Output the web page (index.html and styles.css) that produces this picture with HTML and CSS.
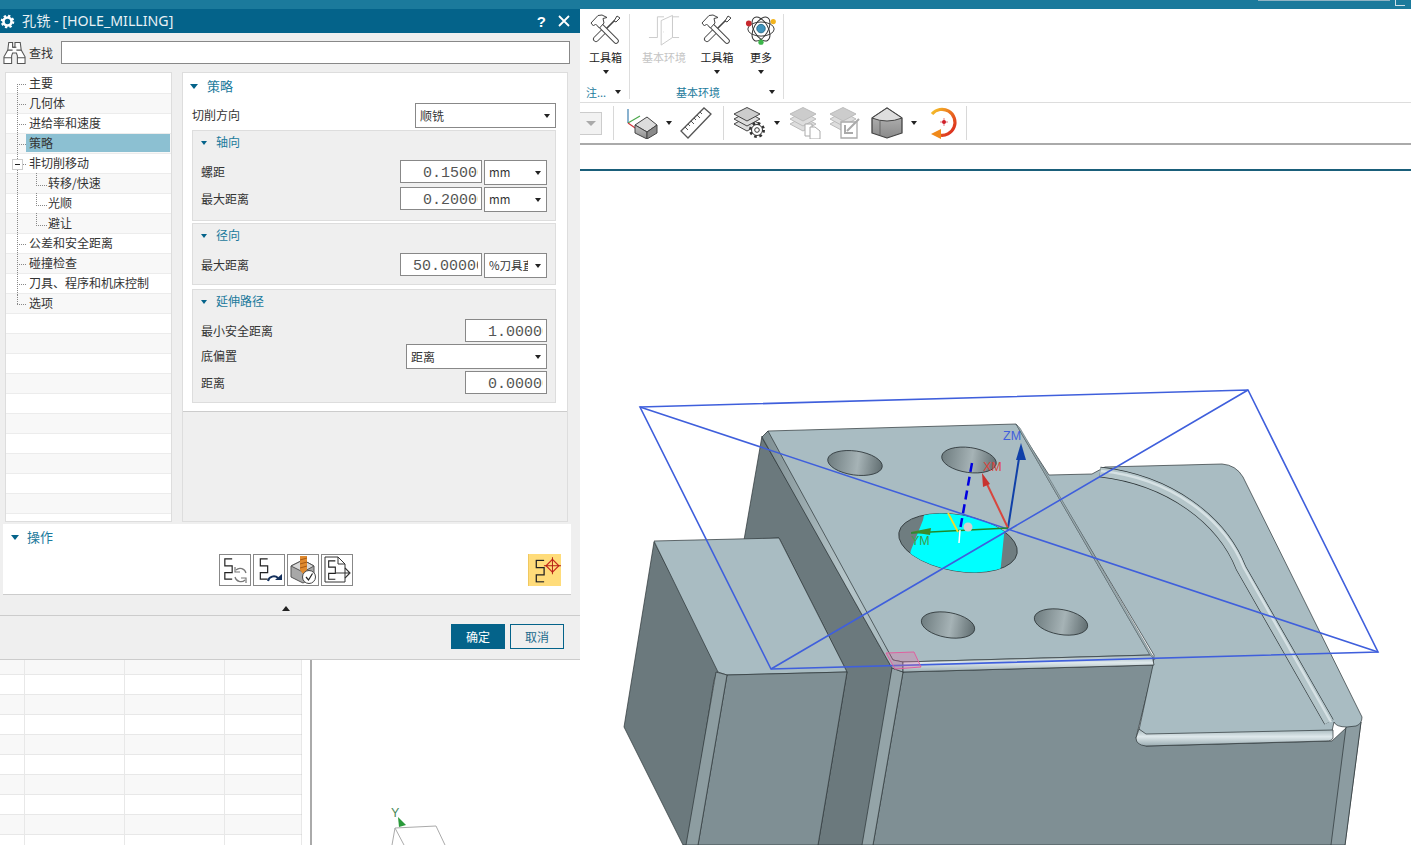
FILE: index.html
```html
<!DOCTYPE html>
<html lang="zh-CN">
<head>
<meta charset="utf-8">
<title>孔铣 - [HOLE_MILLING]</title>
<link rel="stylesheet" href="styles.css">
</head>
<body>
<svg class="defs" width="0" height="0" aria-hidden="true">
  <symbol id="tools" viewBox="0 0 32 32">
    <path d="M14 17 6 25" fill="none" stroke="#444" stroke-width="6" stroke-linecap="round"/>
    <path d="M14 17 6 25" fill="none" stroke="#fff" stroke-width="4.200" stroke-linecap="round"/>
    <path d="M14 17 25 6" fill="none" stroke="#444" stroke-width="1.600"/>
    <path d="M24 7 27 2 30 4 26 8Z" fill="#fff" stroke="#444" stroke-width="1"/>
    <path d="M10 11 26 27" fill="none" stroke="#444" stroke-width="5.600" stroke-linecap="round"/>
    <path d="M10 11 26 27" fill="none" stroke="#fff" stroke-width="3.800" stroke-linecap="round"/>
    <path d="M1 9 8 1.500 12 1 17 3.500 13 4.500 14 9 9.500 14 5.500 10 3.500 12Z" fill="#fff" stroke="#444" stroke-width="1" stroke-linejoin="round"/>
  </symbol>
  <symbol id="serp" viewBox="0 0 12 24">
    <path d="M10 1H2V8.500H10V16H2V23H10" fill="none" stroke="#222" stroke-width="1.300"/>
  </symbol>
  <symbol id="layers" viewBox="0 0 28 28">
    <path d="M1 17 14 10 27 17 14 24Z" fill="#ddd" stroke="currentColor"/>
    <path d="M1 12 14 5 27 12 14 19Z" fill="#ddd" stroke="currentColor"/>
    <path d="M1 7 14 0.500 27 7 14 14Z" fill="#ccc" stroke="currentColor"/>
  </symbol>
</svg>

<div class="app">
  <div class="topbar"><span class="top-search"></span><span class="top-corner"></span></div>

  <div class="ribbon">
    <div class="rib-group rib-group-a">
      <div class="rib-tools">
        <div class="tool tool-a"><svg class="tool-icon"><use href="#tools"/></svg><span class="tool-label">工具箱</span><i class="caret"></i></div>
      </div>
      <div class="rib-label"><span>注...</span><i class="caret"></i></div>
    </div>
    <div class="rib-group rib-group-b">
      <div class="rib-tools">
        <div class="tool tool-door">
          <svg class="tool-icon" viewBox="0 0 34 34"><path d="M1 25H10V3H17M26 3H33M26 25H33M26 3V25" fill="none" stroke="#c9c9c9"/><path d="M14 7 26 1.500V25L14 33Z" fill="#fff" stroke="#c9c9c9"/><circle cx="16.500" cy="19" r=".5" fill="#bbb"/></svg>
          <span class="tool-label tool-label-off">基本环境</span>
        </div>
        <div class="tool tool-box"><svg class="tool-icon"><use href="#tools"/></svg><span class="tool-label">工具箱</span><i class="caret"></i></div>
        <div class="tool tool-more">
          <svg class="tool-icon" viewBox="0 0 34 34"><g fill="none" stroke="#333" stroke-width="1"><ellipse cx="17" cy="16" rx="14" ry="7.500"/><ellipse cx="17" cy="16" rx="14" ry="7.500" transform="rotate(60 17 16)"/><ellipse cx="17" cy="16" rx="14" ry="7.500" transform="rotate(120 17 16)"/></g><circle cx="17" cy="15.500" r="4.500" fill="#3f94bd" stroke="#2a6d8c"/><circle cx="4" cy="10" r="3" fill="#c8282d"/><circle cx="30" cy="8" r="2.800" fill="#f2b31c"/><circle cx="17" cy="30" r="2.800" fill="#3cb54a"/></svg>
          <span class="tool-label">更多</span><i class="caret"></i>
        </div>
      </div>
      <div class="rib-label rib-label-b"><span>基本环境</span><i class="caret"></i></div>
    </div>
  </div>

  <div class="toolbar">
    <div class="tb-combo"><i class="caret caret-off"></i></div>
    <i class="tb-sep tb-sep-a"></i>
    <svg class="tb-icon tb-axis" viewBox="0 0 32 32">
      <defs><linearGradient id="cubel" x1="0" x2="0" y1="0" y2="1"><stop offset="0" stop-color="#c4c4c4"/><stop offset="1" stop-color="#8c8c8c"/></linearGradient></defs>
      <path d="M2 16V2" stroke="#3b7fb0" stroke-width="1.200"/><path d="M2 16 14 9" stroke="#4aa84a" stroke-width="1.200"/><path d="M2 16 15 25" stroke="#d0343a" stroke-width="1.200"/>
      <path d="M9 18 21 10 31 18 21 25Z" fill="#dcdcdc" stroke="#444"/><path d="M9 18 21 25V32L9 26Z" fill="url(#cubel)" stroke="#444"/><path d="M21 25 31 18V26L21 32Z" fill="#8a8a8a" stroke="#444"/>
    </svg>
    <i class="caret tb-caret"></i>
    <svg class="tb-icon tb-ruler" viewBox="0 0 32 32">
      <path d="M1 24 24 1 31 7 8 31Z" fill="#fff" stroke="#555" stroke-width="1.300"/>
      <path d="M5 20 8 23M8 17 10 19M11 14 14 17M14 11 16 13M17 8 20 11M20 5 22 7" stroke="#555" stroke-width="1"/>
    </svg>
    <i class="tb-sep tb-sep-b"></i>
    <svg class="tb-icon tb-layergear" viewBox="0 0 34 32">
      <use href="#layers" x="0" y="0" width="28" height="28" class="ink-dark"/>
      <circle cx="24" cy="23" r="6.500" fill="#fff" stroke="#333" stroke-width="3" stroke-dasharray="2.500 2.600"/>
      <circle cx="24" cy="23" r="5.500" fill="#fff" stroke="#333"/><circle cx="24" cy="23" r="2.300" fill="#fff" stroke="#333"/>
    </svg>
    <i class="caret tb-caret tb-caret-gear"></i>
    <svg class="tb-icon tb-copy" viewBox="0 0 32 32">
      <use href="#layers" x="0" y="0" width="28" height="28" class="ink-light"/>
      <path d="M16 17H23V29H16Z" fill="#fff" stroke="#aaa"/><path d="M21 20H26L31 24V32H21Z" fill="#fff" stroke="#aaa"/>
    </svg>
    <svg class="tb-icon tb-export" viewBox="0 0 32 32">
      <use href="#layers" x="0" y="0" width="28" height="28" class="ink-light"/>
      <path d="M12 15H28V31H12Z" fill="#fff" stroke="#aaa" stroke-width="1.300"/><path d="M30 12 18 24M16 18V26H24" fill="none" stroke="#aaa" stroke-width="2"/>
    </svg>
    <svg class="tb-icon tb-solid" viewBox="0 0 32 32">
      <defs><linearGradient id="solidg" x1="0" x2="0" y1="0" y2="1"><stop offset="0" stop-color="#bdbdbd"/><stop offset="1" stop-color="#8a8a8a"/></linearGradient></defs>
      <path d="M1 11 16 1 31 11V26L16 31 1 26Z" fill="url(#solidg)" stroke="#444" stroke-width="1.300" stroke-linejoin="round"/>
      <path d="M1 11 16 1 31 11Q16 17 1 11Z" fill="#dedede" stroke="#444"/><path d="M9 14V28" stroke="#666"/>
    </svg>
    <i class="caret tb-caret tb-caret-solid"></i>
    <svg class="tb-icon tb-rotate" viewBox="0 0 32 32">
      <defs><linearGradient id="rotg" x1="0" x2="1" y1="0" y2="1"><stop offset="0" stop-color="#f6c52a"/><stop offset=".5" stop-color="#ea6a1f"/><stop offset="1" stop-color="#d8201f"/></linearGradient></defs>
      <path d="M3 7A13 13 0 1 1 10 28" fill="none" stroke="url(#rotg)" stroke-width="3.200"/>
      <path d="M12 22V32L2 27Z" fill="#f08a1c"/><circle cx="15" cy="15" r="2" fill="#d0202a"/><path d="M15 11V19M11 15H19" stroke="#d0202a" stroke-width=".6"/>
    </svg>
    <i class="tb-sep tb-sep-c"></i>
  </div>

  <div class="tabstrip"></div>

  <div class="main">
    <div class="left-pane">
      <div class="grid-row grid-row-alt"><i></i><i></i><i></i><i></i></div>
      <div class="grid-row"><i></i><i></i><i></i><i></i></div>
      <div class="grid-row grid-row-alt"><i></i><i></i><i></i><i></i></div>
      <div class="grid-row"><i></i><i></i><i></i><i></i></div>
      <div class="grid-row grid-row-alt"><i></i><i></i><i></i><i></i></div>
      <div class="grid-row"><i></i><i></i><i></i><i></i></div>
      <div class="grid-row grid-row-alt"><i></i><i></i><i></i><i></i></div>
      <div class="grid-row"><i></i><i></i><i></i><i></i></div>
      <div class="grid-row grid-row-alt"><i></i><i></i><i></i><i></i></div>
      <div class="grid-row"><i></i><i></i><i></i><i></i></div>
    </div>

    <svg class="viewport" viewBox="312 171 1099 674" preserveAspectRatio="none">
      <defs>
        <linearGradient id="holeg" x1="0" x2="1" y1="0" y2="0"><stop offset="0" stop-color="#6f7d80"/><stop offset=".55" stop-color="#a6b3b6"/><stop offset="1" stop-color="#616e71"/></linearGradient>
        <linearGradient id="filletb" x1="0" x2="0" y1="0" y2="1"><stop offset="0" stop-color="#a3b5ba"/><stop offset=".45" stop-color="#dfe9ec"/><stop offset="1" stop-color="#9aacb1"/></linearGradient>
        <linearGradient id="filletl" x1="0" x2="1" y1="0" y2="0"><stop offset="0" stop-color="#7e8e92"/><stop offset=".6" stop-color="#b6c6ca"/><stop offset="1" stop-color="#a3b5ba"/></linearGradient>
        <clipPath id="bighole"><ellipse cx="958" cy="543" rx="60" ry="28" transform="rotate(10 958 543)"/></clipPath>
      </defs>
      <g stroke="#2b3336" stroke-width=".7" stroke-linejoin="round">
        <path d="M762 436 744 540 779 538 847 672 818 845H870L892 668Z" fill="#6b797d"/>
        <path d="M654 542 720 668 714 680 688 845H683L624 727Z" fill="#6b797d"/>
        <path d="M654 541 779 538 847 672 727 675 718 672Z" fill="#a9bcc2"/>
        <path d="M727 675 847 672 818 845H698Z" fill="#7f8f94"/>
        <path d="M716 672 727 675 698 845H686Z" fill="#8d9da1"/>
        <path d="M903 672 1154 665 1136 738 1146 746 1332 741 1347 727 1361 722 1345 845H873Z" fill="#7f8f94"/>
        <path d="M1346 727 1361 722 1345 845H1331Z" fill="#8c9ca1"/>
        <path d="M892 668 903 672 873 845H862Z" fill="#94a4a8"/>
        <path d="M1016 424 1049 475 1092 474 1105 467 1222 464Q1236 465 1243 477L1362 717Q1362 724 1356 726L1347 727Q1336 727 1334 722L1332 731 1146 735 1139 730 1153 665 1154 655Z" fill="#a9bcc2"/>
        <path d="M1146 734 1333 730V738Q1332 741 1326 741L1146 746Q1136 745 1136 738L1139 729Z" fill="url(#filletb)"/>
        <path d="M1100 472C1170 480 1222 520 1241 568L1329 722" fill="none" stroke="#2b3336" stroke-width="10.500"/>
        <path d="M1100 472C1170 480 1222 520 1241 568L1329 722" fill="none" stroke="#b4c5c9" stroke-width="9.300"/>
        <path d="M1101 471C1170 478 1224 518 1244 568L1331 722" fill="none" stroke="#d6e1e4" stroke-width="2.500"/>
        <path d="M768 431 1016 424 1150 655 903 662 893 660 762 438Z" fill="#a9bcc2"/>
        <path d="M768 431 762 437 892 668 903 672 903 662 893 660Z" fill="url(#filletl)"/>
        <path d="M903 662 1152 655 1154 665 903 672Z" fill="url(#filletb)"/>
        <path d="M1016 424 1020 428 1155 660 1150 655Z" fill="#9fb1b6" stroke="#5a686c" stroke-width=".5"/>
      </g>
      <g stroke="#2b3336" stroke-width=".8">
        <ellipse cx="855" cy="463" rx="27.500" ry="12" transform="rotate(8 855 463)" fill="url(#holeg)"/>
        <ellipse cx="969" cy="460" rx="27.500" ry="12.500" transform="rotate(8 969 460)" fill="url(#holeg)"/>
        <ellipse cx="948" cy="625" rx="27" ry="12.500" transform="rotate(10 948 625)" fill="url(#holeg)"/>
        <ellipse cx="1061" cy="622" rx="27" ry="12.500" transform="rotate(10 1061 622)" fill="url(#holeg)"/>
        <ellipse cx="958" cy="543" rx="60" ry="28" transform="rotate(10 958 543)" fill="#6f7d80"/>
      </g>
      <path clip-path="url(#bighole)" d="M926 505H1007L1000 575H905L911 550 923 520Z" fill="#00ffff"/>
      <g fill="none" stroke="#3f5fdc" stroke-width="1.600">
        <path d="M640 407 1248 390 1378 652 771 669Z"/>
        <path d="M640 407 1378 652M1248 390 771 669"/>
      </g>
      <path d="M886 653 914 652 921 667 895 669Z" fill="#e06fa8" fill-opacity=".3" stroke="#e0609f"/>
      <path d="M1008 528 1020 452" stroke="#1040a8" stroke-width="2"/>
      <path d="M1021 443 1026 460H1016Z" fill="#1040a8"/>
      <path d="M1008 528 986 482" stroke="#d8463e" stroke-width="2"/>
      <path d="M982 473 990 484 983 487Z" fill="#c8322e"/>
      <path d="M1008 528 911 533" stroke="#1f8a2a" stroke-width="1.500"/>
      <path d="M911 532 931 528 930 535Z" fill="#3f8a2a"/>
      <path d="M972 463 960 530" stroke="#0000e0" stroke-width="2.500" stroke-dasharray="9 5" fill="none"/>
      <path d="M948 513 958 532" stroke="#f2de2a" stroke-width="1.800"/>
      <path d="M960 530 959 543" stroke="#fff" stroke-width="1.500"/>
      <circle cx="968" cy="527" r="4.500" fill="#d0d0d0"/>
      <text class="lbl-axis" x="1003" y="440" fill="#3f5fdc">ZM</text>
      <text class="lbl-axis" x="983" y="471" fill="#d8463e">XM</text>
      <text class="lbl-axis" x="911" y="545" fill="#3f9a4a">YM</text>
      <text class="lbl-axis" x="391" y="817" fill="#4a8a5a">Y</text>
      <path d="M398 817 406 825 399 827Z" fill="#2a9a3a"/>
      <path d="M392 845 395 828 436 826 445 845M395 828 404 845" fill="none" stroke="#aaa"/>
    </svg>
  </div>

  <section class="dialog">
    <header class="dlg-title">
      <svg class="dlg-gear" viewBox="0 0 16 16"><circle cx="8" cy="8" r="6" fill="none" stroke="#fff" stroke-width="2.500" stroke-dasharray="2.400 2.300"/><circle cx="8" cy="8" r="4.300" fill="none" stroke="#fff" stroke-width="2.800"/></svg>
      <span class="dlg-name">孔铣 - [HOLE_MILLING]</span>
      <span class="dlg-help">?</span>
      <svg class="dlg-close" viewBox="0 0 12 12"><path d="M1 1 11 11M11 1 1 11" stroke="#fff" stroke-width="1.800"/></svg>
    </header>

    <div class="search">
      <svg class="binoc" viewBox="0 0 24 24" fill="#fff" stroke="#555" stroke-width="1.100">
        <path d="M6 1H10V6H12.500V1H18V1L19 9 23 16V23H15V15L14 12H10L9 15V23H1V16L5 9Z"/>
        <path d="M1 17H9M15 17H23M10 6H14M5 9H10M14 9H19"/>
      </svg>
      <span class="search-label">查找</span>
      <div class="search-input"></div>
    </div>

    <div class="panes">
      <nav class="tree">
        <div class="node lv0 first"><span class="txt">主要</span></div>
        <div class="node lv0 alt"><span class="txt">几何体</span></div>
        <div class="node lv0"><span class="txt">进给率和速度</span></div>
        <div class="node lv0 alt"><span class="txt sel">策略</span></div>
        <div class="node lv0"><b class="toggle"></b><span class="txt">非切削移动</span></div>
        <div class="node lv1 alt"><span class="txt">转移/快速</span></div>
        <div class="node lv1"><span class="txt">光顺</span></div>
        <div class="node lv1 alt last1"><span class="txt">避让</span></div>
        <div class="node lv0"><span class="txt">公差和安全距离</span></div>
        <div class="node lv0 alt"><span class="txt">碰撞检查</span></div>
        <div class="node lv0"><span class="txt">刀具、程序和机床控制</span></div>
        <div class="node lv0 alt last0"><span class="txt">选项</span></div>
        <div class="node"></div><div class="node alt"></div><div class="node"></div><div class="node alt"></div>
        <div class="node"></div><div class="node alt"></div><div class="node"></div><div class="node alt"></div>
        <div class="node"></div><div class="node alt"></div><div class="node"></div>
      </nav>

      <div class="props">
        <div class="sec">
          <div class="sec-head sec-head-main"><i class="tri"></i><span>策略</span></div>
          <div class="dir-row"><span class="lab-dir">切削方向</span><div class="sel-box sel-dir"><span>顺铣</span><i class="caret"></i></div></div>

          <div class="grp grp-axial">
            <div class="grp-head"><i class="tri tri-s"></i><span>轴向</span></div>
            <div class="rows">
              <div class="row"><span class="lab">螺距</span><div class="num"><span class="num-val">0.15000</span></div><div class="sel-box sel-unit"><span>mm</span><i class="caret"></i></div></div>
              <div class="row"><span class="lab">最大距离</span><div class="num"><span class="num-val">0.20000</span></div><div class="sel-box sel-unit"><span>mm</span><i class="caret"></i></div></div>
            </div>
          </div>

          <div class="grp grp-radial">
            <div class="grp-head"><i class="tri tri-s"></i><span>径向</span></div>
            <div class="rows">
              <div class="row"><span class="lab">最大距离</span><div class="num num-w"><span class="num-val">50.00000</span></div><div class="sel-box sel-unit"><span class="clip">%刀具直径</span><i class="caret"></i></div></div>
            </div>
          </div>

          <div class="grp grp-ext">
            <div class="grp-head"><i class="tri tri-s"></i><span>延伸路径</span></div>
            <div class="rows">
              <div class="row row-s"><span class="lab">最小安全距离</span><div class="num"><span class="num-val">1.00000</span></div></div>
              <div class="row"><span class="lab">底偏置</span><div class="sel-box sel-wide"><span>距离</span><i class="caret"></i></div></div>
              <div class="row row-s"><span class="lab">距离</span><div class="num"><span class="num-val">0.00000</span></div></div>
            </div>
          </div>
        </div>
      </div>
    </div>

    <div class="ops">
      <div class="sec-head ops-head"><i class="tri"></i><span>操作</span></div>
      <div class="ops-icons">
        <button class="act" type="button">
          <svg viewBox="0 0 30 30"><use href="#serp" x="3" y="3" width="11" height="22"/><path d="M26 18A6 6 0 0 0 16 15M15 22A6 6 0 0 0 25 25" fill="none" stroke="#777" stroke-width="1.200"/><path d="M15 12V17H20M26 28V23H21" fill="none" stroke="#777" stroke-width="1.200"/></svg>
        </button>
        <button class="act" type="button">
          <svg viewBox="0 0 30 30"><use href="#serp" x="4" y="3" width="12" height="22"/><path d="M14 26A6 6 0 0 1 24 23" fill="none" stroke="#14305c" stroke-width="2"/><path d="M21 25H28V19Z" fill="#14305c"/></svg>
        </button>
        <button class="act" type="button">
          <svg viewBox="0 0 30 30"><path d="M3 11 15 5 26 11V22L15 28 3 22Z" fill="#a8a8a8" stroke="#555"/><path d="M3 11 15 17 26 11 15 5Z" fill="#d8d8d8" stroke="#555"/><path d="M12 1H19V15L15 19 12 15Z" fill="#e08a2e"/><path d="M12 5 19 3M12 9 19 7M12 13 19 11" stroke="#a85a14"/><circle cx="21" cy="22" r="6.500" fill="#fff" stroke="#444"/><path d="M18 22 20.500 25 24.500 18.500" fill="none" stroke="#222" stroke-width="1.200"/></svg>
        </button>
        <button class="act" type="button">
          <svg viewBox="0 0 30 30"><path d="M3 2H16L23 9V27H3Z" fill="#fff" stroke="#333"/><path d="M16 2V9H23" fill="none" stroke="#333"/><use href="#serp" x="5" y="5" width="10" height="20"/><path d="M14 18H27M23 13 28 18 23 23" fill="none" stroke="#333" stroke-width="1.100"/></svg>
        </button>
        <button class="act act-on" type="button">
          <svg viewBox="0 0 30 30"><use href="#serp" x="5" y="5" width="11" height="22"/><path d="M22 5 28 11 22 17 16 11Z" fill="none" stroke="#c8281e" stroke-width="1.100"/><path d="M22 3V19M14 11H30" stroke="#b01e14" stroke-width=".9"/></svg>
        </button>
      </div>
    </div>

    <div class="collapse"><i class="tri-up"></i></div>

    <footer class="dlg-foot">
      <button class="btn btn-ok" type="button">确定</button>
      <button class="btn" type="button">取消</button>
    </footer>
  </section>
</div>
</body>
</html>
```

FILE: styles.css
```css
* { box-sizing: border-box; }
html, body { margin: 0; padding: 0; background: #fff; }
body {
  font-family: "Noto Sans CJK SC", "Noto Sans", sans-serif;
  font-size: 12px;
  color: #333;
  overflow: hidden;
}
i { display: block; }
.defs { position: absolute; }
.ink-dark { color: #444; }
.ink-light { color: #bbb; }

.app { position: relative; width: 1411px; height: 845px; overflow: hidden; background: #fff; }

.caret { width: 0; height: 0; border-left: 3.500px solid transparent; border-right: 3.500px solid transparent; border-top: 4px solid #222; }

/* top bar */
.topbar { height: 9px; background: #1b7a9c; display: flex; justify-content: flex-end; }
.top-search { width: 132px; height: 1px; background: #8fb4c4; margin-right: 5px; }
.top-corner { width: 10px; height: 6px; border-left: 1px solid #cfe0e8; border-bottom: 1px solid #cfe0e8; margin-right: 6px; }

/* ribbon */
.ribbon { height: 94px; display: flex; padding-left: 582px; border-bottom: 1px solid #ddd; padding-bottom: 3px; }
.rib-group { display: flex; flex-direction: column; border-right: 1px solid #ddd; margin-top: 5px; }
.rib-group-a { width: 48px; }
.rib-group-b { width: 154px; }
.rib-tools { display: flex; height: 72px; }
.tool { display: flex; flex-direction: column; align-items: center; }
.tool-icon { width: 34px; height: 32px; display: block; }
.tool-label { font-size: 11px; line-height: 14px; margin-top: 4px; color: #222; white-space: nowrap; }
.tool-label-off { color: #c4c4c4; }
.tool .caret { margin-top: 6px; }
.tool-a { width: 47px; }
.tool-door { width: 46px; margin-left: 11px; }
.tool-box { width: 44px; margin-left: 8px; }
.tool-more { width: 40px; margin-left: 2px; }
.rib-label { display: flex; justify-content: space-between; align-items: center; height: 14px; color: #1b7a9c; font-size: 11px; padding: 0 8px 0 4px; }
.rib-label-b { padding: 0 8px 0 46px; }

/* toolbar */
.toolbar { height: 42px; display: flex; align-items: center; padding-left: 580px; border-bottom: 2px solid #aaa; }
.tb-combo { width: 22px; height: 23px; border: 1px solid #ccc; border-left: 0; background: #f2f2f2; display: flex; align-items: center; justify-content: center; }
.caret-off { border-top-color: #aaa; border-left-width: 5px; border-right-width: 5px; border-top-width: 5px; }
.tb-sep { width: 1px; height: 34px; background: #d8d8d8; }
.tb-sep-a { margin-left: 11px; }
.tb-sep-b { margin-left: 11px; }
.tb-sep-c { margin-left: 5px; }
.tb-icon { width: 32px; height: 32px; display: block; flex: none; }
.tb-axis { margin-left: 12px; }
.tb-caret { margin-left: 8px; }
.tb-ruler { margin-left: 8px; }
.tb-layergear { width: 34px; margin-left: 9px; }
.tb-caret-gear { margin-left: 7px; }
.tb-copy { margin-left: 9px; }
.tb-export { margin-left: 8px; }
.tb-solid { margin-left: 10px; }
.tb-caret-solid { margin-left: 8px; }
.tb-rotate { margin-left: 12px; }

.tabstrip { height: 26px; border-bottom: 2px solid #1a5f7a; }

/* main */
.main { display: flex; height: 674px; }
.left-pane { width: 312px; flex: none; padding-top: 484px; border-right: 2px solid #aaa; overflow: hidden; padding-right: 8px; }
.grid-row { display: grid; grid-template-columns: 25px 100px 100px 77px; height: 20px; border-bottom: 1px solid #e8e8e8; border-right: 1px solid #ccc; }
.grid-row-alt { background: #f8f8f8; }
.grid-row i { border-right: 1px solid #e8e8e8; }
.viewport { width: 1099px; height: 674px; display: block; flex: none; }
.lbl-axis { font-family: "Liberation Sans", sans-serif; font-size: 12.500px; }

/* dialog */
.dialog { position: absolute; left: 0; top: 9px; width: 580px; height: 651px; background: #efefef; border-bottom: 1px solid #ccc; display: flex; flex-direction: column; }
.dlg-title { height: 24px; flex: none; background: #04638a; color: #fff; display: flex; align-items: center; }
.dlg-gear { width: 15px; height: 15px; display: block; margin-right: 7px; }
.dlg-name { font-size: 14.200px; line-height: 24px; color: #e8f1f5; font-family: "Noto Sans", "Noto Sans CJK SC", sans-serif; }
.dlg-help { margin-left: auto; font: bold 15px "Liberation Sans", sans-serif; margin-right: 12px; }
.dlg-close { width: 12px; height: 12px; margin-right: 10px; display: block; }

.search { height: 39px; flex: none; display: flex; align-items: center; padding: 0 10px 0 3px; }
.binoc { width: 23px; height: 24px; display: block; flex: none; }
.search-label { margin-left: 3px; width: 32px; font-size: 12px; }
.search-input { flex: 1; height: 23px; background: #fff; border: 1px solid #888; }

.panes { height: 450px; flex: none; display: flex; padding-left: 5px; }
.tree { width: 167px; height: 450px; background: #fff; border: 1px solid #ddd; overflow: hidden; padding-top: 1px; }
.node { position: relative; height: 20px; padding-left: 20px; padding-bottom: 1px; border-bottom: 1px solid #ececec; display: flex; }
.node.alt { background: #f8f8f8; }
.txt { flex: 1; line-height: 17px; padding-left: 3px; margin-right: 1px; color: #333; white-space: nowrap; }
.txt.sel { background: #8cc0d2; line-height: 18px; }
.lv1 .txt { padding-left: 22px; }
.lv0::before { content: ""; position: absolute; left: 11px; top: 0; height: 21px; border-left: 1px dotted #888; }
.lv0::after { content: ""; position: absolute; left: 11px; top: 10px; width: 9px; border-top: 1px dotted #888; }
.lv1::before { content: ""; position: absolute; left: 11px; top: 0; height: 21px; border-left: 1px dotted #888; }
.lv1::after { content: ""; position: absolute; left: 30px; top: -1px; width: 10px; height: 12px; border-left: 1px dotted #888; border-bottom: 1px dotted #888; }
.first::before { top: 10px; height: 11px; }
.last0::before { height: 10px; }
.toggle { position: absolute; left: 6px; top: 5px; width: 11px; height: 11px; background: #fff; border: 1px solid #ccc; z-index: 1; }
.toggle::after { content: ""; position: absolute; left: 2px; top: 4px; width: 5px; height: 1px; background: #222; }

.props { width: 386px; height: 450px; margin-left: 10px; border: 1px solid #ddd; background: #efefef; }
.sec { background: #fff; padding: 0 11px 8px 9px; border-bottom: 1px solid #ccc; }
.sec-head { height: 30px; display: flex; align-items: flex-start; padding-top: 3px; color: #1b7a9c; font-size: 13px; line-height: 20px; }
.tri { width: 0; height: 0; border-left: 4.500px solid transparent; border-right: 4.500px solid transparent; border-top: 5px solid #04638a; margin: 8px 8px 0 -2px; }
.sec-head-main .tri { margin-right: 9px; }
.tri-s { border-left-width: 3.500px; border-right-width: 3.500px; border-top-width: 4px; margin: 10px 9px 0 0; }
.dir-row { display: flex; justify-content: space-between; align-items: center; height: 25px; margin-bottom: 2px; }
.lab-dir { position: relative; top: -1px; }
.sel-box { height: 25px; background: #fff; border: 1px solid #888; display: flex; align-items: center; justify-content: space-between; padding: 0 5px 0 4px; overflow: hidden; }
.sel-box .caret { flex: none; }
.sel-dir { width: 141px; }
.sel-unit { width: 63px; margin-left: 2px; font-size: 11.500px; flex: none; padding-bottom: 2px; }
.sel-unit .caret { margin-top: 2px; }
.sel-wide { width: 141px; }
.clip { width: 39px; overflow: hidden; white-space: nowrap; font-size: 11.500px; }

.grp { background: #efefef; border: 1px solid #ddd; padding: 0 8px 0 8px; margin-bottom: 2px; }
.grp-axial { height: 91px; }
.grp-radial { height: 62px; margin-bottom: 4px; }
.grp-ext { height: 114px; margin-bottom: 0; }
.grp-head { height: 29px; display: flex; align-items: flex-start; color: #1b7a9c; font-size: 12px; line-height: 22px; }
.rows { display: flex; flex-direction: column; gap: 2px; }
.row { display: flex; align-items: flex-start; height: 25px; }
.row-s { height: 23px; }
.lab { margin-right: auto; line-height: 23px; }
.num { width: 82px; height: 23px; background: #fff; border: 1px solid #888; padding: 0 3px 0 22px; }
.num-w { padding-left: 12px; }
.num-val { display: block; overflow: hidden; white-space: nowrap; font-family: "Liberation Mono", monospace; font-size: 15px; line-height: 25px; height: 21px; color: #555; }

.ops { flex: none; height: 71px; margin: 2px 9px 0 3px; background: #fff; border-bottom: 1px solid #ccc; }
.ops-head { height: 30px; padding-left: 10px; padding-top: 3px; }
.ops-icons { display: flex; gap: 2px; padding: 0 10px 0 216px; }
.act { width: 32px; height: 32px; padding: 0; background: #fff; border: 1.500px solid #888; display: block; }
.act svg { width: 100%; height: 100%; display: block; }
.act-on { margin-left: auto; width: 33px; background: #ffdc7a; border: 0; border-left: 1px solid #f0c860; }

.collapse { flex: none; height: 21px; display: flex; justify-content: center; align-items: flex-start; border-bottom: 1px solid #ccc; padding: 11px 8px 0 0; }
.tri-up { width: 0; height: 0; border-left: 4.500px solid transparent; border-right: 4.500px solid transparent; border-bottom: 5px solid #222; }

.dlg-foot { flex: none; display: flex; justify-content: flex-end; gap: 5px; padding: 8px 16px 0 0; }
.btn { width: 54px; height: 25px; padding: 0; background: #efefef; border: 1px solid #04638a; color: #1b6a8c; font: 12px "Noto Sans CJK SC", sans-serif; }
.btn-ok { background: #04638a; color: #fff; }
```
